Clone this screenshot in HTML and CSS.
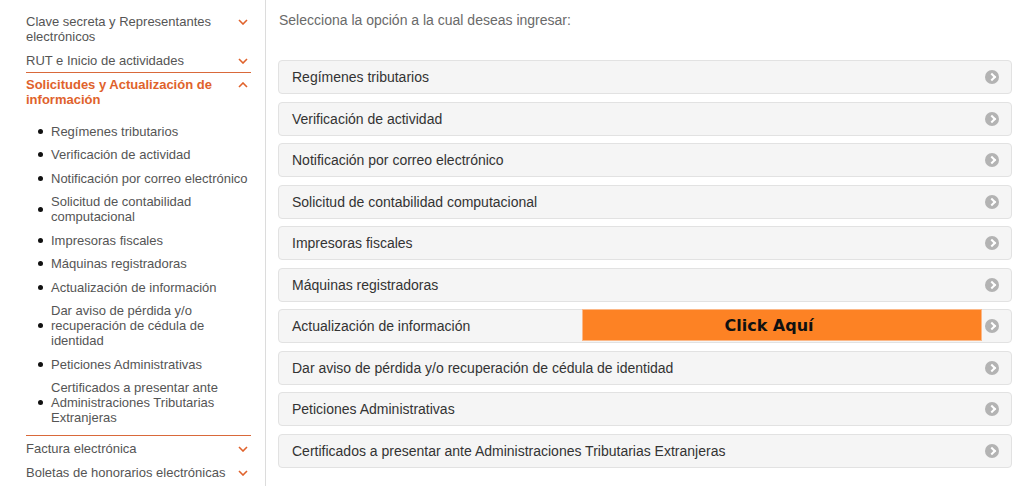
FILE: index.html
```html
<!DOCTYPE html>
<html lang="es">
<head>
    <meta charset="UTF-8">
    <title>Solicitudes y Actualización de información</title>
    <link rel="stylesheet" href="styles.css">
</head>
<body>
<div class="page">
    <div class="side-menu">
        <div class="menu-item">
            <span>Clave secreta y Representantes electrónicos</span>
            <svg class="chev" viewBox="0 0 10 6"><path d="M1 1 L5 5 L9 1"/></svg>
        </div>
        <div class="menu-item">
            <span>RUT e Inicio de actividades</span>
            <svg class="chev" viewBox="0 0 10 6"><path d="M1 1 L5 5 L9 1"/></svg>
        </div>
        <div class="menu-group">
            <div class="menu-item active">
                <span>Solicitudes y Actualización de información</span>
                <svg class="chev" viewBox="0 0 10 6"><path d="M1 5 L5 1 L9 5"/></svg>
            </div>
            <ul class="sub-menu">
                <li>Regímenes tributarios</li>
                <li>Verificación de actividad</li>
                <li>Notificación por correo electrónico</li>
                <li>Solicitud de contabilidad computacional</li>
                <li>Impresoras fiscales</li>
                <li>Máquinas registradoras</li>
                <li>Actualización de información</li>
                <li>Dar aviso de pérdida y/o recuperación de cédula de identidad</li>
                <li>Peticiones Administrativas</li>
                <li>Certificados a presentar ante Administraciones Tributarias Extranjeras</li>
            </ul>
        </div>
        <div class="menu-item">
            <span>Factura electrónica</span>
            <svg class="chev" viewBox="0 0 10 6"><path d="M1 1 L5 5 L9 1"/></svg>
        </div>
        <div class="menu-item">
            <span>Boletas de honorarios electrónicas</span>
            <svg class="chev" viewBox="0 0 10 6"><path d="M1 1 L5 5 L9 1"/></svg>
        </div>
    </div>

    <div class="content">
        <p class="intro">Selecciona la opción a la cual deseas ingresar:</p>
        <div class="options">
            <a class="option">Regímenes tributarios<span class="go"></span></a>
            <a class="option">Verificación de actividad<span class="go"></span></a>
            <a class="option">Notificación por correo electrónico<span class="go"></span></a>
            <a class="option">Solicitud de contabilidad computacional<span class="go"></span></a>
            <a class="option">Impresoras fiscales<span class="go"></span></a>
            <a class="option">Máquinas registradoras<span class="go"></span></a>
            <a class="option">Actualización de información<span class="click-here">Click Aquí</span><span class="go"></span></a>
            <a class="option">Dar aviso de pérdida y/o recuperación de cédula de identidad<span class="go"></span></a>
            <a class="option">Peticiones Administrativas<span class="go"></span></a>
            <a class="option">Certificados a presentar ante Administraciones Tributarias Extranjeras<span class="go"></span></a>
        </div>
    </div>
</div>
</body>
</html>
```

FILE: styles.css
```css
body {
    margin: 0;
    font-family: "Liberation Sans", Arial, sans-serif;
    color: #333;
    background: #fff;
    overflow: hidden;
}
.page {
    display: flex;
    height: 486px;
}
.side-menu {
    width: 225px;
    padding: 9px 14px 0 26px;
    border-right: 1px solid #dcdcdc;
    font-size: 13px;
    line-height: 15px;
    color: #555;
}
.menu-item {
    display: flex;
    justify-content: space-between;
    align-items: flex-start;
    padding: 4.5px 0;
}
.menu-item span {
    max-width: 200px;
}
.chev {
    width: 10px;
    height: 6px;
    margin: 5px 3px 0 0;
    fill: none;
    stroke: #e0622b;
    stroke-width: 1.6;
}
.menu-group {
    border-top: 1.5px solid #d9693a;
    border-bottom: 1.5px solid #d9693a;
}
.menu-item.active {
    color: #e0622b;
    font-weight: bold;
    padding-top: 4px;
}
.sub-menu {
    list-style: none;
    margin: 0;
    padding: 12px 0 10px 12px;
    display: flex;
    flex-direction: column;
    gap: 8.5px;
}
.sub-menu li {
    display: flex;
    align-items: center;
    gap: 8px;
}
.sub-menu li::before {
    content: "";
    flex: none;
    width: 5px;
    height: 5px;
    border-radius: 50%;
    background: #111;
}
.content {
    flex: 1;
    padding: 0 12px 0 12px;
}
.intro {
    margin: 12px 0 0 1px;
    font-size: 14px;
    line-height: 16px;
    color: #6a6a6a;
}
.options {
    margin-top: 32px;
}
.option {
    position: relative;
    display: flex;
    align-items: center;
    justify-content: space-between;
    box-sizing: border-box;
    height: 34px;
    margin-bottom: 7.5px;
    padding: 0 12px 0 13px;
    background: #f5f5f5;
    border: 1px solid #e2e2e2;
    border-radius: 4px;
    font-size: 14px;
    color: #333;
}
.go {
    position: relative;
    width: 14px;
    height: 14px;
    border-radius: 50%;
    background: #b3b3b3;
}
.go::after {
    content: "";
    position: absolute;
    left: 3.5px;
    top: 4px;
    width: 4px;
    height: 4px;
    border-top: 2px solid #fff;
    border-right: 2px solid #fff;
    transform: rotate(45deg);
}
.click-here {
    position: absolute;
    left: 303px;
    top: -1px;
    width: 400px;
    height: 32px;
    box-sizing: border-box;
    padding-right: 26px;
    border: 1px solid #fcb887;
    background: #fd8224;
    color: #111;
    font-family: "DejaVu Sans", sans-serif;
    font-weight: bold;
    font-size: 16px;
    display: flex;
    align-items: center;
    justify-content: center;
}
```
